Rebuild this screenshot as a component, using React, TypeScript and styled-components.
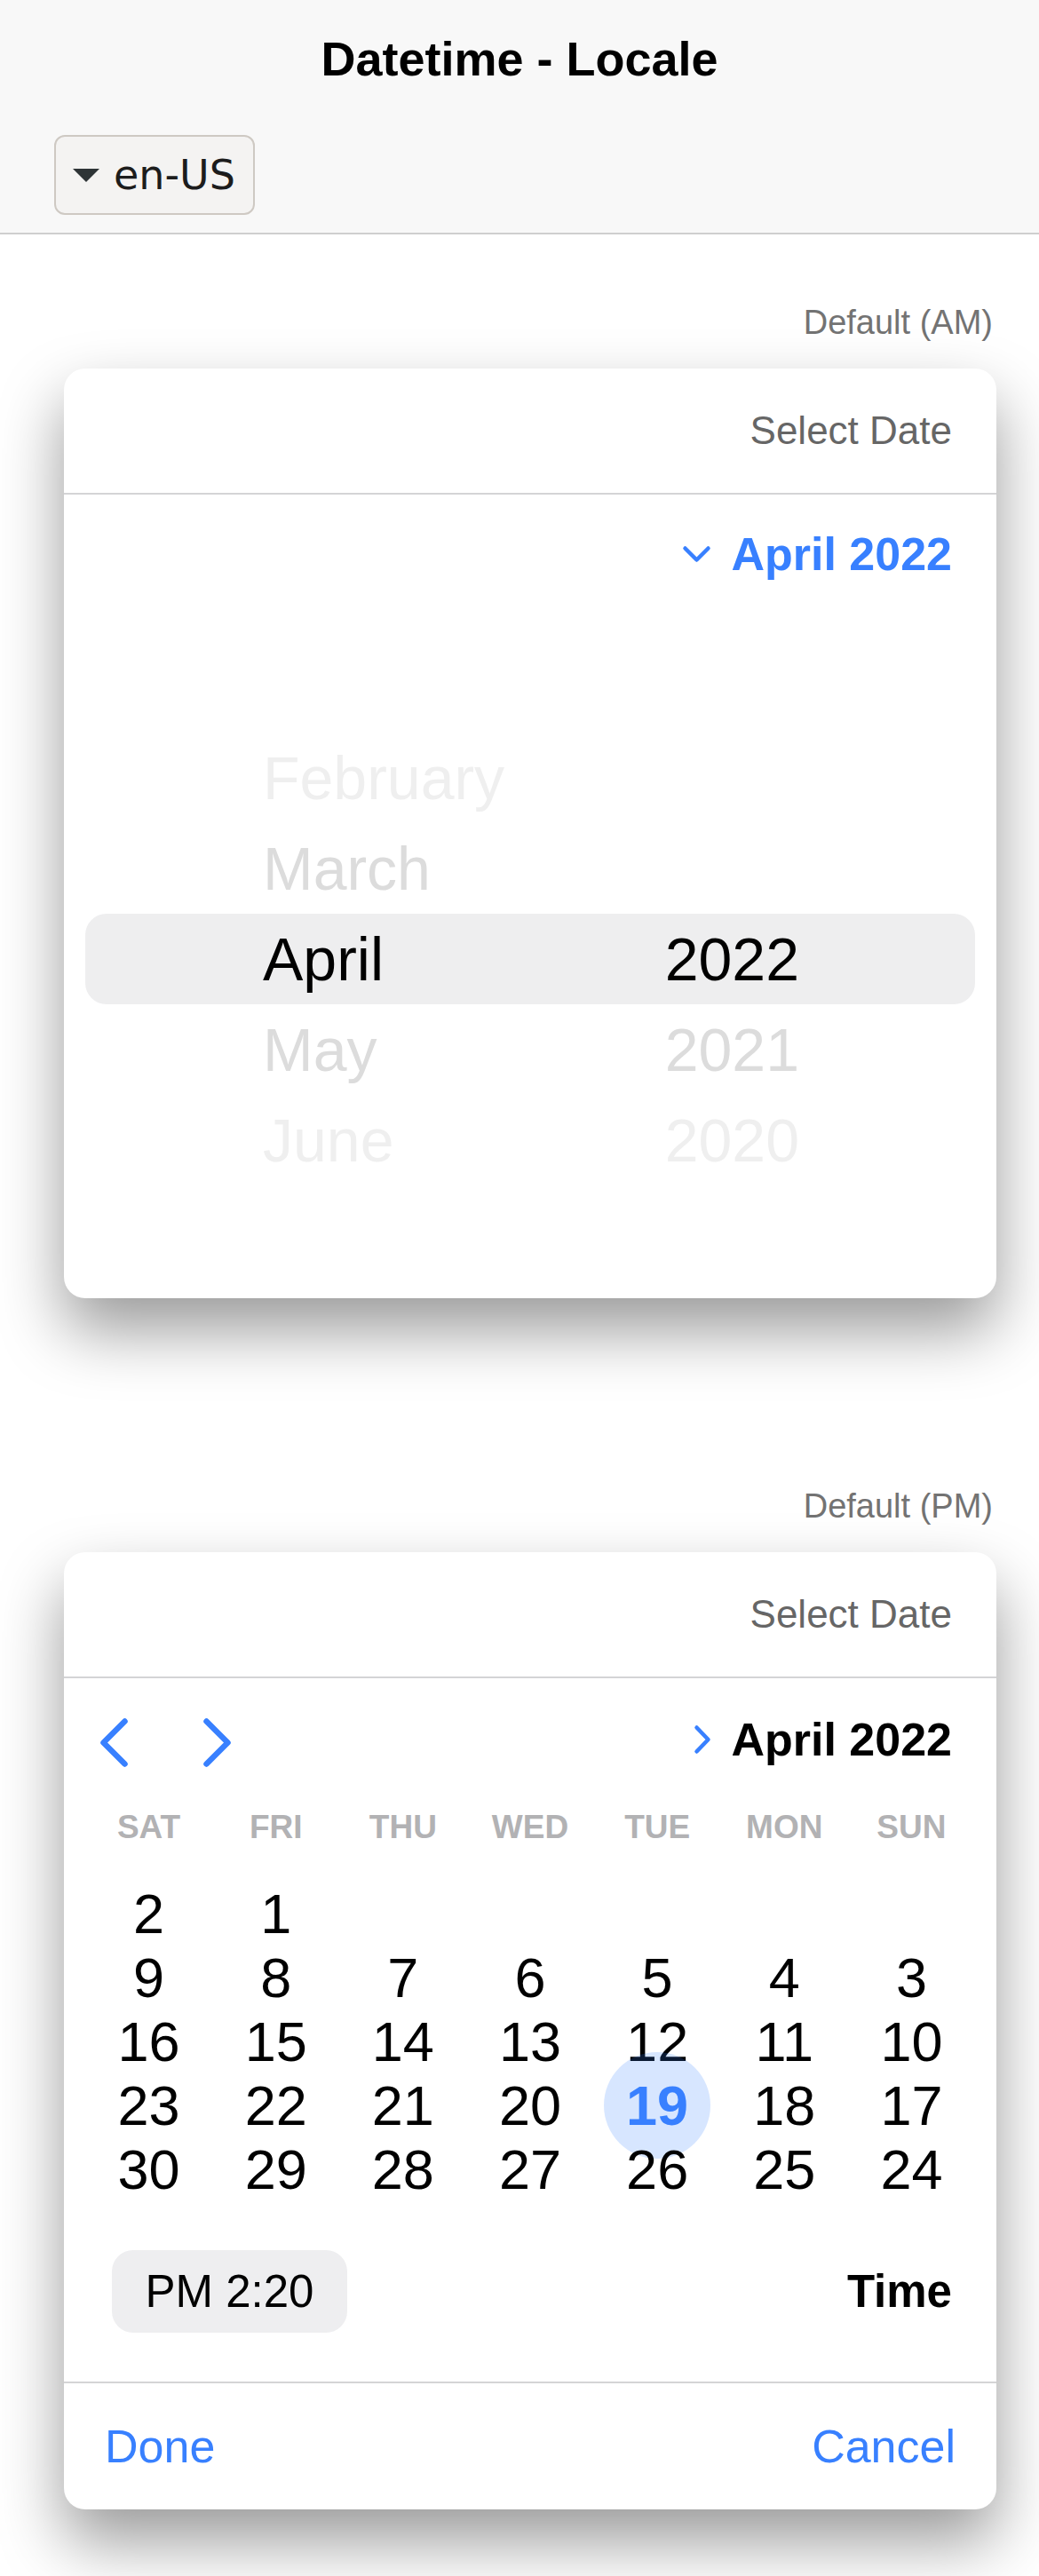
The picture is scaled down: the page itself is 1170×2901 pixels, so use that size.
import React from 'react';
import styled, { createGlobalStyle } from 'styled-components';

const GlobalStyle = createGlobalStyle`
  html, body { margin: 0; padding: 0; background: #fff; }
  body { font-family: "Liberation Sans", Arial, Helvetica, sans-serif; -webkit-font-smoothing: antialiased; }
  * { box-sizing: border-box; }
`;

const BLUE = '#3880ff';

const Page = styled.div`
  width: 1170px;
  min-height: 2901px;
  background: #fff;
  display: flex;
  flex-direction: column;
`;

const Header = styled.header`
  background: #f8f8f8;
  border-bottom: 2px solid #cfcfcf;
`;

const TitleBar = styled.div`
  height: 132px;
  display: flex;
  align-items: center;
  justify-content: center;
`;

const Title = styled.h1`
  margin: 0;
  font-size: 54px;
  font-weight: 700;
  color: #000;
`;

const SelectBar = styled.div`
  height: 130px;
  display: flex;
  align-items: center;
  padding-left: 61px;
`;

const LocaleSelect = styled.div`
  width: 226px;
  height: 90px;
  border: 2px solid #cec9c3;
  border-radius: 12px;
  background: #f4f3f2;
  display: flex;
  align-items: center;
  padding-left: 19px;
  gap: 16px;
  font-family: "DejaVu Sans", "Noto Sans", sans-serif;
  font-size: 46px;
  color: #1c1c1c;
`;

const Caret = styled.span`
  width: 0;
  height: 0;
  border-left: 15px solid transparent;
  border-right: 15px solid transparent;
  border-top: 15px solid #2e3436;
`;

const Content = styled.main`
  padding-top: 78px;
  display: flex;
  flex-direction: column;
`;

const SectionLabel = styled.div<{ $gapBefore?: number }>`
  margin-top: ${(p) => p.$gapBefore ?? 0}px;
  margin-bottom: 31px;
  padding-right: 52px;
  text-align: right;
  font-size: 38px;
  line-height: 42px;
  color: #737373;
`;

const Card = styled.section`
  margin: 0 48px 0 72px;
  background: #fff;
  border-radius: 24px;
  box-shadow: 0 36px 72px rgba(0, 0, 0, 0.4);
  display: flex;
  flex-direction: column;
`;

const CardHeader = styled.div`
  height: 142px;
  border-bottom: 2px solid #d4d4d6;
  display: flex;
  align-items: center;
  justify-content: flex-end;
  padding-right: 50px;
  font-size: 44px;
  color: #666;
`;

const MonthYearBar = styled.div`
  height: 166px;
  padding: 42px 50px 0 0;
  display: flex;
  align-items: flex-start;
  justify-content: flex-end;
`;

const MonthYearToggle = styled.div<{ $color: string }>`
  display: flex;
  align-items: center;
  gap: 23px;
  height: 50px;
  font-size: 52px;
  line-height: 50px;
  font-weight: 700;
  color: ${(p) => p.$color};
`;

const Wheel = styled.div`
  display: flex;
  flex-direction: column;
  padding-bottom: 25px;
`;

const WheelRow = styled.div<{ $active?: boolean }>`
  height: 102px;
  margin: 0 24px;
  padding: 0 198px 0 200px;
  display: flex;
  align-items: center;
  justify-content: space-between;
  font-size: 68px;
  border-radius: 24px;
  background: ${(p) => (p.$active ? '#eeeeef' : 'transparent')};
`;

const WheelItem = styled.span<{ $color: string }>`
  color: ${(p) => p.$color};
`;

const NavBar = styled.div`
  height: 138px;
  padding: 0 50px 0 41px;
  display: flex;
  align-items: center;
  justify-content: space-between;
`;

const NavButtons = styled.div`
  display: flex;
  align-items: center;
  gap: 85px;
  padding-top: 6px;
`;

const IconSvg = styled.svg`
  display: block;
  overflow: visible;
`;

const Weekdays = styled.div`
  height: 60px;
  margin: 0 24px;
  display: grid;
  grid-template-columns: repeat(7, 1fr);
  align-items: center;
`;

const Weekday = styled.div`
  text-align: center;
  font-size: 37px;
  font-weight: 700;
  text-transform: uppercase;
  color: #b2b2b4;
`;

const DaysGrid = styled.div`
  margin: 31px 24px 0;
  display: grid;
  grid-template-columns: repeat(7, 1fr);
  grid-auto-rows: 72px;
`;

const DayCell = styled.div`
  display: flex;
  align-items: center;
  justify-content: center;
`;

const DayNum = styled.span<{ $selected?: boolean }>`
  flex-shrink: 0;
  display: flex;
  align-items: center;
  justify-content: center;
  width: ${(p) => (p.$selected ? '120px' : 'auto')};
  height: ${(p) => (p.$selected ? '120px' : 'auto')};
  border-radius: 50%;
  background: ${(p) => (p.$selected ? 'rgba(56, 128, 255, 0.2)' : 'transparent')};
  color: ${(p) => (p.$selected ? BLUE : '#000')};
  font-weight: ${(p) => (p.$selected ? 700 : 400)};
  font-size: 63px;
`;

const TimeRow = styled.div`
  margin-top: 55px;
  padding: 0 50px 55px 54px;
  border-bottom: 2px solid #d4d4d6;
  display: flex;
  align-items: center;
  justify-content: space-between;
`;

const TimeButton = styled.div`
  height: 93px;
  width: 265px;
  border-radius: 24px;
  background: #eeeef0;
  display: flex;
  align-items: center;
  justify-content: center;
  font-size: 51px;
  color: #000;
`;

const TimeLabel = styled.div`
  font-size: 51px;
  font-weight: 700;
  color: #000;
`;

const Footer = styled.div`
  height: 142px;
  padding: 0 46px;
  display: flex;
  align-items: center;
  justify-content: space-between;
`;

const FooterButton = styled.span`
  font-size: 52px;
  color: ${BLUE};
`;

const ChevronDown = () => (
  <IconSvg width="31" height="18" viewBox="0 0 31 18">
    <polyline points="2.5,2.5 15.5,15.5 28.5,2.5" fill="none" stroke={BLUE} strokeWidth="4.5" strokeLinecap="round" strokeLinejoin="round" />
  </IconSvg>
);

const ChevronSmallRight = () => (
  <IconSvg width="18" height="32" viewBox="0 0 18 32">
    <polyline points="2.5,2.5 15.5,16 2.5,29.5" fill="none" stroke={BLUE} strokeWidth="4.5" strokeLinecap="round" strokeLinejoin="round" />
  </IconSvg>
);

const ChevronBig = ({ dir }: { dir: 'left' | 'right' }) => (
  <IconSvg width="31" height="55" viewBox="0 0 31 55">
    <polyline
      points={dir === 'left' ? '27.5,3.5 3.5,27.5 27.5,51.5' : '3.5,3.5 27.5,27.5 3.5,51.5'}
      fill="none"
      stroke={BLUE}
      strokeWidth="6.5"
      strokeLinecap="round"
      strokeLinejoin="round"
    />
  </IconSvg>
);

const wheelRows: { month: string; mColor: string; year: string; yColor: string; active?: boolean }[] = [
  { month: 'January', mColor: '#ffffff', year: '', yColor: '#fff' },
  { month: 'February', mColor: '#efefef', year: '', yColor: '#fff' },
  { month: 'March', mColor: '#dcdcdc', year: '', yColor: '#fff' },
  { month: 'April', mColor: '#000000', year: '2022', yColor: '#000000', active: true },
  { month: 'May', mColor: '#dcdcdc', year: '2021', yColor: '#dcdcdc' },
  { month: 'June', mColor: '#efefef', year: '2020', yColor: '#efefef' },
  { month: 'July', mColor: '#ffffff', year: '2019', yColor: '#ffffff' },
];

const weekdays = ['Sat', 'Fri', 'Thu', 'Wed', 'Tue', 'Mon', 'Sun'];

const weeks: (number | null)[][] = [
  [2, 1, null, null, null, null, null],
  [9, 8, 7, 6, 5, 4, 3],
  [16, 15, 14, 13, 12, 11, 10],
  [23, 22, 21, 20, 19, 18, 17],
  [30, 29, 28, 27, 26, 25, 24],
];

export default function App() {
  return (
    <Page>
      <GlobalStyle />
      <Header>
        <TitleBar>
          <Title>Datetime - Locale</Title>
        </TitleBar>
        <SelectBar>
          <LocaleSelect>
            <Caret />
            <span>en-US</span>
          </LocaleSelect>
        </SelectBar>
      </Header>
      <Content>
        <SectionLabel>Default (AM)</SectionLabel>
        <Card>
          <CardHeader>Select Date</CardHeader>
          <MonthYearBar>
            <MonthYearToggle $color={BLUE}>
              <ChevronDown />
              <span>April 2022</span>
            </MonthYearToggle>
          </MonthYearBar>
          <Wheel>
            {wheelRows.map((r) => (
              <WheelRow key={r.month} $active={r.active}>
                <WheelItem $color={r.mColor}>{r.month}</WheelItem>
                <WheelItem $color={r.yColor}>{r.year}</WheelItem>
              </WheelRow>
            ))}
          </Wheel>
        </Card>

        <SectionLabel $gapBefore={213}>Default (PM)</SectionLabel>
        <Card>
          <CardHeader>Select Date</CardHeader>
          <NavBar>
            <NavButtons>
              <ChevronBig dir="left" />
              <ChevronBig dir="right" />
            </NavButtons>
            <MonthYearToggle $color="#000">
              <ChevronSmallRight />
              <span>April 2022</span>
            </MonthYearToggle>
          </NavBar>
          <Weekdays>
            {weekdays.map((d) => (
              <Weekday key={d}>{d}</Weekday>
            ))}
          </Weekdays>
          <DaysGrid>
            {weeks.flatMap((w, wi) =>
              w.map((d, di) => (
                <DayCell key={`${wi}-${di}`}>
                  {d !== null && <DayNum $selected={d === 19}>{d}</DayNum>}
                </DayCell>
              ))
            )}
          </DaysGrid>
          <TimeRow>
            <TimeButton>PM 2:20</TimeButton>
            <TimeLabel>Time</TimeLabel>
          </TimeRow>
          <Footer>
            <FooterButton>Done</FooterButton>
            <FooterButton>Cancel</FooterButton>
          </Footer>
        </Card>
      </Content>
    </Page>
  );
}
